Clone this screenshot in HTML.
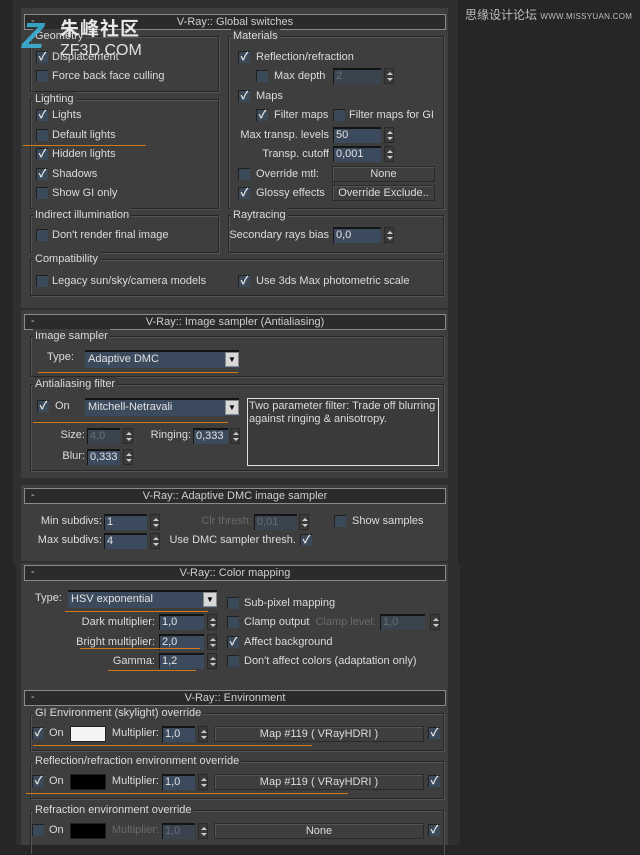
<!DOCTYPE html>
<html><head><meta charset="utf-8"><style>
*{margin:0;padding:0;box-sizing:border-box}
body{width:640px;height:845px;background:#262626;position:relative;overflow:hidden;font-family:"Liberation Sans","Noto Sans CJK SC",sans-serif}
div,span{position:absolute}
.strip{background:#2f2f2f}
.pan{background:#3e3e3e}
.t{font-size:11px;line-height:14px;color:#dcdcdc;white-space:nowrap}
.d{color:#6a6a6a}
.h{height:16px;left:24px;width:422px;background:#2b2b2b;border:1px solid #8a8a8a;font-size:11px;line-height:14px;color:#cfcfcf;text-align:center}
.h b{position:absolute;left:6px;top:-1px;font-weight:normal}
.g{border:1px solid #262626;box-shadow:1px 1px 0 #555, inset 1px 1px 0 #555}
.gl{font-size:11px;line-height:14px;color:#dcdcdc;background:#3e3e3e;padding:0 2px;white-space:nowrap;top:-8px;left:2px}
.c{width:12px;height:12px;background:#3b4a58;border-top:1px solid #202020;border-left:1px solid #202020;color:#e8e8e8;font-size:11px;line-height:11px;text-align:center;font-weight:bold}
.f{height:16px;background:#3b4b5d;border-top:2px solid #141414;border-left:1px solid #141414;font-size:11px;line-height:13px;color:#e2e2e2;padding-left:2px;white-space:nowrap;overflow:hidden}
.fd{color:#66707a;background:#39444f}
.s{width:10px;height:16px;background:#3a3a3a;border:1px solid #2a2a2a}
.s:before{content:"";position:absolute;left:2px;top:3px;border-left:3px solid transparent;border-right:3px solid transparent;border-bottom:3px solid #ccc}
.s:after{content:"";position:absolute;left:2px;top:9px;border-left:3px solid transparent;border-right:3px solid transparent;border-top:3px solid #ccc}
.btn{height:16px;border:1px solid #2a2a2a;box-shadow:inset 1px 1px 0 #555;font-size:11px;line-height:14px;text-align:center;color:#dcdcdc;white-space:nowrap;overflow:hidden}
.dd{height:18px;background:#3b4b5d;border-top:2px solid #141414;font-size:11px;line-height:15px;color:#e2e2e2;padding-left:3px}
.dd i{position:absolute;right:0;top:0;width:14px;height:15px;background:#d8d8d8;border:1px solid #888;font-style:normal;color:#000;font-size:8px;line-height:13px;text-align:center}
.o{height:1px;background:#d07a1c}
</style></head><body>

<div class="strip" style="left:13px;top:0;width:445px;height:565px"></div>
<div class="strip" style="left:16px;top:565px;width:444px;height:280px"></div>
<div class="pan" style="left:21px;top:8px;width:427px;height:300px"></div>
<div class="pan" style="left:21px;top:310px;width:427px;height:168px"></div>
<div class="pan" style="left:21px;top:485px;width:427px;height:76px"></div>
<div class="pan" style="left:21px;top:563px;width:427px;height:125px"></div>
<div class="pan" style="left:21px;top:688px;width:427px;height:157px"></div>

<!-- Global switches -->
<div class="h" style="top:14px"><b>-</b>V-Ray:: Global switches</div>
<div class="g" style="left:30px;top:36px;width:189px;height:56px"><span class="gl">Geometry</span></div>
<div class="c" style="left:36px;top:51px">✓</div><div class="t" style="left:52px;top:50px">Displacement</div>
<div class="c" style="left:36px;top:70px"></div><div class="t" style="left:52px;top:69px">Force back face culling</div>

<div class="g" style="left:30px;top:99px;width:189px;height:110px"><span class="gl">Lighting</span></div>
<div class="c" style="left:36px;top:109px">✓</div><div class="t" style="left:52px;top:108px">Lights</div>
<div class="c" style="left:36px;top:129px"></div><div class="t" style="left:52px;top:128px">Default lights</div>
<div class="o" style="left:23px;top:145px;width:123px"></div>
<div class="c" style="left:36px;top:148px">✓</div><div class="t" style="left:52px;top:147px">Hidden lights</div>
<div class="c" style="left:36px;top:168px">✓</div><div class="t" style="left:52px;top:167px">Shadows</div>
<div class="c" style="left:36px;top:187px"></div><div class="t" style="left:52px;top:186px">Show GI only</div>

<div class="g" style="left:228px;top:36px;width:216px;height:173px"><span class="gl">Materials</span></div>
<div class="c" style="left:238px;top:51px">✓</div><div class="t" style="left:256px;top:50px">Reflection/refraction</div>
<div class="c" style="left:256px;top:70px"></div><div class="t" style="left:274px;top:69px">Max depth</div>
<div class="f fd" style="left:333px;top:68px;width:48px">2</div><div class="s" style="left:384px;top:68px"></div>
<div class="c" style="left:238px;top:90px">✓</div><div class="t" style="left:256px;top:89px">Maps</div>
<div class="c" style="left:256px;top:109px">✓</div><div class="t" style="left:274px;top:108px">Filter maps</div>
<div class="c" style="left:333px;top:109px"></div><div class="t" style="left:349px;top:108px">Filter maps for GI</div>
<div class="t" style="right:311px;top:128px">Max transp. levels</div>
<div class="f" style="left:333px;top:127px;width:48px">50</div><div class="s" style="left:384px;top:127px"></div>
<div class="t" style="right:311px;top:147px">Transp. cutoff</div>
<div class="f" style="left:333px;top:146px;width:48px">0,001</div><div class="s" style="left:384px;top:146px"></div>
<div class="c" style="left:238px;top:168px"></div><div class="t" style="left:256px;top:167px">Override mtl:</div>
<div class="btn d" style="left:332px;top:166px;width:103px">None</div>
<div class="c" style="left:238px;top:187px">✓</div><div class="t" style="left:256px;top:186px">Glossy effects</div>
<div class="btn d" style="left:332px;top:185px;width:103px">Override Exclude..</div>

<div class="g" style="left:30px;top:215px;width:189px;height:38px"><span class="gl">Indirect illumination</span></div>
<div class="c" style="left:36px;top:229px"></div><div class="t" style="left:52px;top:228px">Don't render final image</div>
<div class="g" style="left:228px;top:215px;width:216px;height:38px"><span class="gl">Raytracing</span></div>
<div class="t" style="right:311px;top:228px">Secondary rays bias</div>
<div class="f" style="left:333px;top:227px;width:48px">0,0</div><div class="s" style="left:384px;top:227px"></div>

<div class="g" style="left:30px;top:259px;width:414px;height:37px"><span class="gl">Compatibility</span></div>
<div class="c" style="left:36px;top:275px"></div><div class="t" style="left:52px;top:274px">Legacy sun/sky/camera models</div>
<div class="c" style="left:238px;top:275px">✓</div><div class="t" style="left:256px;top:274px">Use 3ds Max photometric scale</div>

<!-- Image sampler -->
<div class="h" style="top:314px"><b>-</b>V-Ray:: Image sampler (Antialiasing)</div>
<div class="g" style="left:30px;top:336px;width:414px;height:41px"><span class="gl">Image sampler</span></div>
<div class="t" style="left:47px;top:350px">Type:</div>
<div class="dd" style="left:85px;top:350px;width:154px">Adaptive DMC<i>▼</i></div>
<div class="o" style="left:38px;top:372px;width:200px"></div>
<div class="g" style="left:30px;top:384px;width:414px;height:87px"><span class="gl">Antialiasing filter</span></div>
<div class="c" style="left:37px;top:400px">✓</div><div class="t" style="left:55px;top:399px">On</div>
<div class="dd" style="left:85px;top:398px;width:154px">Mitchell-Netravali<i>▼</i></div>
<div class="o" style="left:33px;top:422px;width:195px"></div>
<div style="left:247px;top:398px;width:192px;height:68px;border:1px solid #e0e0e0;background:#3a3a3a"></div>
<div class="t" style="left:249px;top:400px;line-height:13px">Two parameter filter: Trade off blurring<br>against ringing &amp; anisotropy.</div>
<div class="t" style="right:555px;top:428px">Size:</div>
<div class="f fd" style="left:87px;top:428px;width:33px">4,0</div><div class="s" style="left:123px;top:428px"></div>
<div class="t" style="right:449px;top:428px">Ringing:</div>
<div class="f" style="left:193px;top:428px;width:35px">0,333</div><div class="s" style="left:230px;top:428px"></div>
<div class="t" style="right:555px;top:449px">Blur:</div>
<div class="f" style="left:87px;top:449px;width:33px">0,333</div><div class="s" style="left:123px;top:449px"></div>

<!-- Adaptive DMC -->
<div class="h" style="top:488px"><b>-</b>V-Ray:: Adaptive DMC image sampler</div>
<div class="t" style="right:538px;top:514px">Min subdivs:</div>
<div class="f" style="left:104px;top:514px;width:43px">1</div><div class="s" style="left:150px;top:514px"></div>
<div class="t d" style="right:388px;top:514px">Clr thresh:</div>
<div class="f fd" style="left:254px;top:514px;width:43px">0,01</div><div class="s" style="left:299px;top:514px"></div>
<div class="c" style="left:334px;top:515px"></div><div class="t" style="left:352px;top:514px">Show samples</div>
<div class="t" style="right:538px;top:533px">Max subdivs:</div>
<div class="f" style="left:104px;top:533px;width:43px">4</div><div class="s" style="left:150px;top:533px"></div>
<div class="t" style="right:344px;top:533px">Use DMC sampler thresh.</div>
<div class="c" style="left:300px;top:534px">✓</div>

<!-- Color mapping -->
<div class="h" style="top:565px"><b>-</b>V-Ray:: Color mapping</div>
<div class="t" style="left:35px;top:591px">Type:</div>
<div class="dd" style="left:68px;top:590px;width:149px">HSV exponential<i>▼</i></div>
<div class="o" style="left:65px;top:611px;width:143px"></div>
<div class="c" style="left:227px;top:597px"></div><div class="t" style="left:244px;top:596px">Sub-pixel mapping</div>
<div class="t" style="right:485px;top:615px">Dark multiplier:</div>
<div class="f" style="left:159px;top:614px;width:45px">1,0</div><div class="s" style="left:207px;top:614px"></div>
<div class="c" style="left:227px;top:616px"></div><div class="t" style="left:244px;top:615px">Clamp output</div>
<div class="t d" style="right:264px;top:615px">Clamp level:</div>
<div class="f fd" style="left:380px;top:614px;width:45px">1,0</div><div class="s" style="left:430px;top:614px"></div>
<div class="t" style="right:485px;top:635px">Bright multiplier:</div>
<div class="f" style="left:159px;top:634px;width:45px">2,0</div><div class="s" style="left:207px;top:634px"></div>
<div class="o" style="left:80px;top:648px;width:120px"></div>
<div class="c" style="left:227px;top:636px">✓</div><div class="t" style="left:244px;top:635px">Affect background</div>
<div class="t" style="right:485px;top:654px">Gamma:</div>
<div class="f" style="left:159px;top:653px;width:45px">1,2</div><div class="s" style="left:207px;top:653px"></div>
<div class="o" style="left:108px;top:670px;width:88px"></div>
<div class="c" style="left:227px;top:655px"></div><div class="t" style="left:244px;top:654px">Don't affect colors (adaptation only)</div>

<!-- Environment -->
<div class="h" style="top:690px"><b>-</b>V-Ray:: Environment</div>
<div class="g" style="left:30px;top:713px;width:414px;height:38px"><span class="gl">GI Environment (skylight) override</span></div>
<div class="c" style="left:32px;top:727px">✓</div><div class="t" style="left:49px;top:726px">On</div>
<div style="left:70px;top:726px;width:36px;height:16px;background:#f2f4f6;border:1px solid #222"></div>
<div class="t" style="right:481px;top:726px">Multiplier:</div>
<div class="f" style="left:162px;top:726px;width:33px">1,0</div><div class="s" style="left:198px;top:726px"></div>
<div class="btn" style="left:214px;top:726px;width:210px">Map #119  ( VRayHDRI )</div>
<div class="c" style="left:428px;top:727px">✓</div>
<div class="o" style="left:33px;top:745px;width:279px"></div>

<div class="g" style="left:30px;top:761px;width:414px;height:38px"><span class="gl">Reflection/refraction environment override</span></div>
<div class="c" style="left:32px;top:775px">✓</div><div class="t" style="left:49px;top:774px">On</div>
<div style="left:70px;top:774px;width:36px;height:16px;background:#000;border:1px solid #222"></div>
<div class="t" style="right:481px;top:774px">Multiplier:</div>
<div class="f" style="left:162px;top:774px;width:33px">1,0</div><div class="s" style="left:198px;top:774px"></div>
<div class="btn" style="left:214px;top:774px;width:210px">Map #119  ( VRayHDRI )</div>
<div class="c" style="left:428px;top:775px">✓</div>
<div class="o" style="left:26px;top:793px;width:322px"></div>

<div class="g" style="left:30px;top:810px;width:414px;height:45px"><span class="gl">Refraction environment override</span></div>
<div class="c" style="left:32px;top:824px"></div><div class="t" style="left:49px;top:823px">On</div>
<div style="left:70px;top:823px;width:36px;height:16px;background:#000;border:1px solid #222"></div>
<div class="t d" style="right:481px;top:823px">Multiplier:</div>
<div class="f fd" style="left:162px;top:823px;width:33px">1,0</div><div class="s" style="left:198px;top:823px"></div>
<div class="btn d" style="left:214px;top:823px;width:210px">None</div>
<div class="c d" style="left:428px;top:824px">✓</div>

<!-- watermarks -->
<div style="left:22px;top:18px;font:bold 36px 'Liberation Sans',sans-serif;color:#3cc0e8;opacity:.8;line-height:36px;font-style:italic">Z</div>
<div style="left:60px;top:19px;font:bold 19px 'Liberation Sans','Noto Sans CJK SC',sans-serif;color:#e8e8e8;line-height:22px;letter-spacing:1px">朱峰社区</div>
<div style="left:60px;top:42px;font:16px 'Liberation Sans',sans-serif;color:#e0e0e0;line-height:17px">ZF3D.COM</div>
<div style="left:465px;top:8px;font:12px 'Liberation Sans','Noto Sans CJK SC',sans-serif;color:#bdbdbd;line-height:14px;white-space:nowrap">思缘设计论坛 <span style="position:static;font-size:8px;letter-spacing:.3px">WWW.MISSYUAN.COM</span></div>
</body></html>
